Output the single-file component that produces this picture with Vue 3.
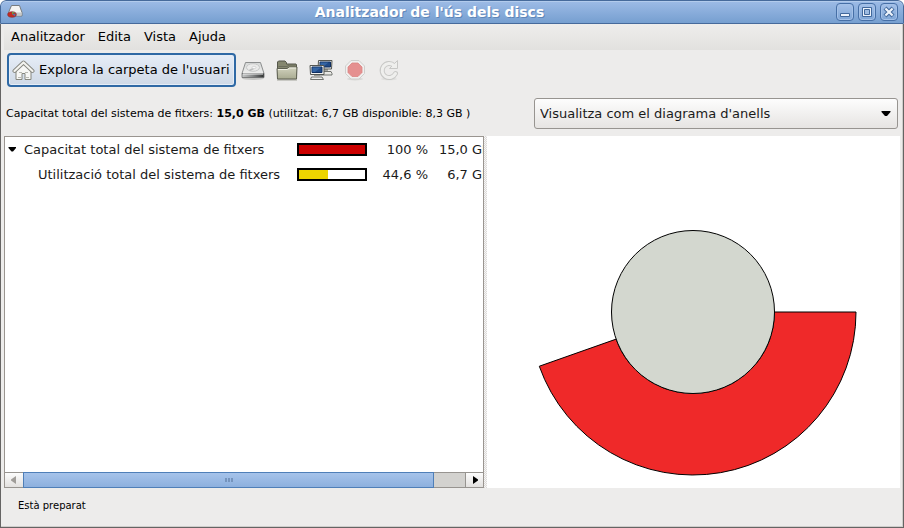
<script setup>
import { ref, computed } from 'vue'

const menus = ['Analitzador', 'Edita', 'Vista', 'Ajuda']
const view = ref('rings')
const rows = [
  { name: 'Capacitat total del sistema de fitxers', share: 100, label: '100 %', size: '15,0 GB', color: '#cc0000', root: true },
  { name: 'Utilització total del sistema de fitxers', share: 44.6, label: '44,6 %', size: '6,7 GB', color: '#edd400', root: false },
]

const cx = 206
const cy = 176
const inner = 81.5
const outer = 163
const ring = computed(() => {
  const a = (rows[1].share / 100) * Math.PI * 2
  const at = (r) => `${cx + r * Math.cos(a)} ${cy + r * Math.sin(a)}`
  return `M${cx + inner} ${cy}H${cx + outer}A${outer} ${outer} 0 0 1 ${at(outer)}L${at(inner)}A${inner} ${inner} 0 0 0 ${cx + inner} ${cy}Z`
})
</script>

<template>
  <div class="window">
    <header class="titlebar">
      <svg class="app-icon" viewBox="0 0 16 16" aria-hidden="true">
        <path d="M4.500 1.500h8l2.500 7v3.500H1.500V8.500z" fill="#f4f4f2" stroke="#777c80" />
        <path d="M2 8.500h12.500v3H2z" fill="#c6c8c8" />
        <ellipse cx="5" cy="10.500" rx="4.300" ry="2.800" fill="#c42b22" stroke="#7c2b35" stroke-width=".6" />
        <path d="M5 10.500L5 8h3z" fill="#6aa04a" />
        <path d="M5 10.500L8.500 9.500 8 12z" fill="#4a78b0" />
      </svg>
      <h1 class="title">Analitzador de l'ús dels discs</h1>
      <div class="window-buttons">
        <button type="button" class="win-btn" aria-label="Minimitza">
          <svg viewBox="0 0 18 18"><path d="M4.500 10.500h9v3h-9z" fill="#edf3fb" stroke="#41689c" /></svg>
        </button>
        <button type="button" class="win-btn" aria-label="Maximitza">
          <svg viewBox="0 0 18 18"><path d="M4.500 4.500h9v9h-9z" fill="#edf3fb" stroke="#41689c" /><path d="M6.500 6.500h5v5h-5z" fill="#9dbbe1" stroke="#41689c" /></svg>
        </button>
        <button type="button" class="win-btn" aria-label="Tanca">
          <svg viewBox="0 0 18 18"><path d="M6.500 6.500l5 5M11.500 6.500l-5 5" stroke="#41689c" stroke-width="4.200" stroke-linecap="square" /><path d="M6.200 6.200l5.600 5.600M11.800 6.200l-5.600 5.600" stroke="#edf3fb" stroke-width="2.200" stroke-linecap="square" /></svg>
        </button>
      </div>
    </header>

    <div class="body">
      <nav class="menubar">
        <button v-for="m in menus" :key="m" type="button" class="menu">{{ m }}</button>
      </nav>

      <div class="toolbar">
        <button type="button" class="home">
          <svg class="icon" viewBox="0 0 24 24" aria-hidden="true">
            <path d="M5 11.500L12.500 5 20 11.500V21.500h-6v-6h-3v6H5z" fill="#f7f7f5" stroke="#86877f" />
            <path d="M8 14.500h3M14 14.500h3M7 19.500h3M15 19.500h3" stroke="#b8b9b3" />
            <path d="M3.500 13L12.500 4.500 21.500 13" fill="none" stroke="#85867f" stroke-width="4" stroke-linecap="round" stroke-linejoin="round" />
            <path d="M3.500 13L12.500 4.500 21.500 13" fill="none" stroke="#f3f3ef" stroke-width="2.200" stroke-linecap="round" stroke-linejoin="round" />
          </svg>
          <span>Explora la carpeta de l'usuari</span>
        </button>

        <button type="button" class="tool" aria-label="Explora el sistema de fitxers">
          <svg class="icon" viewBox="0 0 24 24" aria-hidden="true">
            <defs>
              <linearGradient id="driveFront" x1="0" x2="1"><stop offset="0" stop-color="#c8caca" /><stop offset=".5" stop-color="#858787" /><stop offset="1" stop-color="#2e3030" /></linearGradient>
              <linearGradient id="driveTop" x1="0" x2="0" y1="0" y2="1"><stop offset="0" stop-color="#d6d8d7" /><stop offset="1" stop-color="#eeeeed" /></linearGradient>
            </defs>
            <ellipse cx="12" cy="20.500" rx="11" ry="1.500" fill="#c5c5c3" />
            <path d="M4.500 4.500h15L23 15.500H1z" fill="url(#driveTop)" stroke="#8c8e8e" />
            <ellipse cx="12" cy="9.500" rx="6.500" ry="3.800" fill="#ebebea" stroke="#c6c7c7" />
            <path d="M8.500 12.500l4-2" stroke="#bcbdbd" stroke-width="1.500" />
            <ellipse cx="13" cy="9.500" rx="2" ry="1.200" fill="#f8f8f8" stroke="#c4c5c5" stroke-width=".6" />
            <path d="M1 15.500h22v4H1z" fill="url(#driveFront)" stroke="#686a6a" stroke-width=".8" />
            <path d="M2 16h20" stroke="#f0f0f0" />
          </svg>
        </button>
        <button type="button" class="tool" aria-label="Explora una carpeta">
          <svg class="icon" viewBox="0 0 24 24" aria-hidden="true">
            <defs>
              <linearGradient id="folderFront" x1="0" x2="0" y1="0" y2="1"><stop offset="0" stop-color="#d2d3bf" /><stop offset="1" stop-color="#a9ab91" /></linearGradient>
            </defs>
            <path d="M2 22h20" stroke="#c9c9c4" stroke-width="2" />
            <path d="M2.500 18V4l1-1H10l1.500 1.500V6H21l.5 1V18z" fill="#85876f" stroke="#55574a" />
            <path d="M3.500 8.500h8.500l2-1.500h6.500" fill="none" stroke="#6b6d5b" />
            <path d="M2 10.500h10l2-1.500h8l-.5 12H2.500z" fill="url(#folderFront)" stroke="#5d5f51" />
            <path d="M3 11.500h9.500l2-1.500h6.500" fill="none" stroke="#eeeee2" />
          </svg>
        </button>
        <button type="button" class="tool" aria-label="Explora una carpeta remota">
          <svg class="icon" viewBox="0 0 24 24" aria-hidden="true">
            <path d="M10 15.500l1-2h11l1 2v1.500H10z" fill="#e8e8e4" stroke="#71736e" />
            <path d="M14 11h5v2h-5z" fill="#a4a6a1" />
            <path d="M9.500 2.500h13.500l-.5 8.500H9z" fill="#eeeeeb" stroke="#555753" />
            <path d="M11 4h10.500v5H11z" fill="#204a87" stroke="#0f2f60" />
            <path d="M11.500 4.500h8l-5 4h-3z" fill="#3465a4" />
            <path d="M1.500 21.500l1-2.500h10.500l1.500 2.500z" fill="#efefec" stroke="#71736e" />
            <path d="M5 16.500h6V18H5z" fill="#969892" />
            <path d="M1 7.500h14v9H1.500z" fill="#f1f1ee" stroke="#555753" />
            <path d="M3 9h10v5.500H3z" fill="#204a87" stroke="#0f2f60" />
            <path d="M3.500 9.500H12l-6 4.500H3.500z" fill="#3465a4" />
          </svg>
        </button>
        <button type="button" class="tool" aria-label="Atura" disabled>
          <svg class="icon" viewBox="0 0 24 24" aria-hidden="true">
            <ellipse cx="12" cy="21" rx="8" ry="1.500" fill="#d9d9d7" />
            <path d="M8 2.500h8l5.500 5.500v7.500L16 21H8l-5.500-5.500V8z" fill="#f0f0ef" stroke="#cfcfcd" />
            <path d="M9 5h6l4 4v5.500l-4 4H9l-4-4V9z" fill="#e59090" stroke="#dc8584" stroke-width=".8" />
          </svg>
        </button>
        <button type="button" class="tool" aria-label="Actualitza" disabled>
          <svg class="icon" viewBox="0 0 24 24" aria-hidden="true">
            <ellipse cx="12" cy="21" rx="8" ry="1.300" fill="#e0e0de" />
            <path d="M17 7.500A7 7 0 1 0 18.500 15.500" fill="none" stroke="#c8c8c6" stroke-width="5" stroke-linecap="round" />
            <path d="M20.500 2.500v8h-8l3-3 2-2z" fill="#efefed" stroke="#c8c8c6" stroke-linejoin="round" />
            <path d="M17 7.500A7 7 0 1 0 18.500 15.500" fill="none" stroke="#efefed" stroke-width="3" stroke-linecap="round" />
          </svg>
        </button>
      </div>

      <div class="info">
        <p class="capacity">Capacitat total del sistema de fitxers: <b>15,0 GB</b> (utilitzat: 6,7 GB disponible: 8,3 GB )</p>
        <div class="combo">
          <select v-model="view" aria-label="Visualització">
            <option value="rings">Visualitza com el diagrama d'anells</option>
            <option value="treemap">Visualitza com el diagrama d'arbre</option>
          </select>
          <svg class="combo-arrow" viewBox="0 0 10 6" aria-hidden="true"><path d="M.5 0h9v1L6 5H4L.5 1z" fill="#000" /></svg>
        </div>
      </div>

      <main class="panes">
        <section class="tree">
          <div class="tree-view">
            <table>
              <colgroup>
                <col class="c-name" /><col class="c-bar" /><col class="c-share" /><col class="c-size" />
              </colgroup>
              <tbody>
                <tr v-for="r in rows" :key="r.name">
                  <td>
                    <div class="name" :class="{ child: !r.root }">
                      <svg v-if="r.root" class="expander" viewBox="0 0 8 5" aria-hidden="true"><path d="M.5 0h7.500v1L5 4.500H3.500L.5 1z" fill="#000" /></svg>
                      <span>{{ r.name }}</span>
                    </div>
                  </td>
                  <td><div class="bar"><div class="fill" :style="{ width: r.share + '%', background: r.color }"></div></div></td>
                  <td class="num">{{ r.label }}</td>
                  <td class="num">{{ r.size }}</td>
                </tr>
              </tbody>
            </table>
          </div>
          <div class="scrollbar">
            <button type="button" class="step" aria-label="Desplaça a l'esquerra" disabled>
              <svg viewBox="0 0 6 8"><path d="M5 0v8L0 4.500v-1z" fill="#a09d99" /></svg>
            </button>
            <div class="track"><div class="thumb"><i></i><i></i><i></i></div></div>
            <button type="button" class="step right" aria-label="Desplaça a la dreta">
              <svg viewBox="0 0 6 8"><path d="M1 0v8l5-3.500v-1z" fill="#000" /></svg>
            </button>
          </div>
        </section>
        <div class="splitter"></div>
        <section class="chart">
          <svg viewBox="0 0 413 352" role="img" aria-label="Diagrama d'anells">
            <path :d="ring" fill="#ef2929" stroke="#000" />
            <circle :cx="cx" :cy="cy" :r="inner" fill="#d3d7cf" stroke="#000" />
          </svg>
        </section>
      </main>

      <footer class="status">Està preparat</footer>
    </div>
  </div>
</template>

<style>
body {
  margin: 0;
  background: #fff;
}
</style>

<style scoped>
.window {
  box-sizing: border-box;
  min-height: 100vh;
  display: flex;
  flex-direction: column;
  font-family: "DejaVu Sans", sans-serif;
  font-size: 13px;
  line-height: 16px;
  color: #1a1a1a;
  background: #edeceb;
  border-radius: 6px 6px 0 0;
  overflow: hidden;
}
button,
select {
  font: inherit;
  color: inherit;
  margin: 0;
  padding: 0;
}
button {
  border: 0;
  background: none;
}
svg {
  display: block;
}
.titlebar {
  box-sizing: border-box;
  height: 24px;
  display: grid;
  grid-template-columns: auto 1fr auto;
  align-items: center;
  padding: 0 5px 0 6px;
  border: 1px solid #466a9b;
  border-radius: 6px 6px 0 0;
  background: linear-gradient(#9dbbe6, #769fd0);
  box-shadow: inset 0 1px #b2cbec;
}
.app-icon {
  width: 16px;
  height: 16px;
}
.title {
  margin: 0;
  font-size: 14px;
  font-weight: bold;
  text-align: center;
  color: #fff;
  white-space: nowrap;
  text-shadow: 1px 1px #5f86b8;
}
.window-buttons {
  display: flex;
  justify-content: flex-end;
  gap: 4px;
}
.win-btn {
  box-sizing: border-box;
  display: grid;
  place-content: center;
  width: 18px;
  height: 18px;
  border: 1px solid #466fa6;
  border-radius: 4px;
  background: linear-gradient(#a4c0e8, #7fa6d6);
  box-shadow: inset 0 0 0 1px #a4c1e8;
}
.win-btn svg {
  width: 18px;
  height: 18px;
}
.body {
  flex: 1;
  display: flex;
  flex-direction: column;
  padding: 0 3px;
  border: 1px solid #656463;
  border-top: 0;
  box-shadow: inset 0 -1px #cfcdcb, inset -1px 0 #cfcdcb;
}
.menubar {
  height: 26px;
  display: flex;
  align-items: center;
  gap: 13px;
  padding: 0 7px;
  background: linear-gradient(#eeedec, #e2e1df);
}
.menu {
  color: #000;
}
.toolbar {
  height: 40px;
  display: flex;
  align-items: center;
  padding: 0 3px;
}
.home {
  box-sizing: border-box;
  height: 34px;
  display: flex;
  align-items: center;
  gap: 4px;
  padding: 0 4px 0 2px;
  border: 2px solid #2f69a5;
  border-radius: 4px;
  background: linear-gradient(#e6edf7, #cfd9e6);
  box-shadow: inset 0 0 0 1px #e5edf7;
  color: #000;
  white-space: nowrap;
}
.icon {
  width: 24px;
  height: 24px;
}
.tool {
  width: 34px;
  height: 34px;
  display: grid;
  place-items: center;
}
.info {
  display: flex;
  align-items: center;
  justify-content: space-between;
  gap: 8px;
  padding: 8px 2px 7px;
}
.capacity {
  margin: 0;
  font-size: 11px;
  white-space: nowrap;
  color: #000;
}
.combo {
  position: relative;
  width: 364px;
}
.combo select {
  box-sizing: border-box;
  display: block;
  width: 100%;
  height: 31px;
  padding: 0 24px 0 5px;
  border: 1px solid #979490;
  border-radius: 3px;
  appearance: none;
  background: linear-gradient(#fdfdfd, #e6e4e2);
}
.combo-arrow {
  position: absolute;
  right: 7px;
  top: 13px;
  width: 10px;
  height: 6px;
  pointer-events: none;
}
.panes {
  flex: 1;
  display: flex;
}
.tree {
  box-sizing: border-box;
  flex: 480 1 480px;
  min-width: 0;
  display: flex;
  flex-direction: column;
  border: 1px solid #9a9590;
  border-bottom: 0;
  background: #fff;
}
.tree-view {
  flex: 1;
  overflow: hidden;
}
table {
  width: 489px;
  table-layout: fixed;
  border-collapse: collapse;
}
.c-name {
  width: 289px;
}
.c-bar {
  width: 76px;
}
.c-share {
  width: 61px;
}
.c-size {
  width: 63px;
}
td {
  height: 25px;
  padding: 0 3px;
  white-space: nowrap;
}
.name {
  display: flex;
  align-items: center;
  gap: 8px;
}
.name.child {
  padding-left: 30px;
}
.expander {
  width: 8px;
  height: 5px;
}
.bar {
  box-sizing: border-box;
  height: 13px;
  border: 2px solid #000;
  background: #fff;
}
.fill {
  height: 100%;
}
.num {
  text-align: right;
}
.scrollbar {
  box-sizing: border-box;
  height: 16px;
  display: flex;
  border: 1px solid #979490;
  border-width: 1px 0;
  background: #d3d2cf;
}
.step {
  width: 18px;
  display: grid;
  place-items: center;
  background: linear-gradient(#fcfcfc, #e3e1df);
}
.step.right {
  border-left: 1px solid #979490;
}
.step svg {
  width: 6px;
  height: 8px;
}
.track {
  flex: 1;
  display: flex;
}
.thumb {
  box-sizing: border-box;
  width: 93%;
  margin: -1px 0;
  display: flex;
  align-items: center;
  justify-content: center;
  gap: 1px;
  border: 1px solid #4f7fb8;
  background: linear-gradient(#a6c3ea, #8db0de);
}
.thumb i {
  width: 2px;
  height: 4px;
  background: #7594bd;
}
.splitter {
  flex: none;
  width: 3px;
  background: repeating-conic-gradient(#dcdad8 0 25%, #f7f6f6 0 50%) 0 0 / 2px 2px;
}
.chart {
  flex: 413 1 413px;
  min-width: 0;
  display: flex;
  background: #fff;
}
.chart svg {
  width: 100%;
}
.status {
  height: 39px;
  box-sizing: border-box;
  padding: 10px 14px;
  font-size: 10px;
  color: #000;
}
</style>
